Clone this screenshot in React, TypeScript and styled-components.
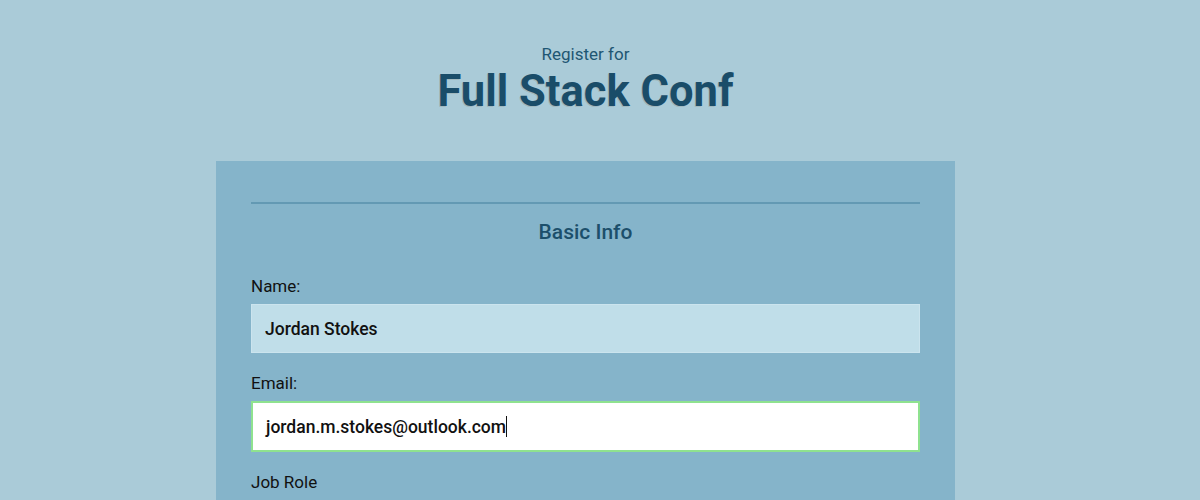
import React from "react";
import styled, { createGlobalStyle } from "styled-components";

const Global = createGlobalStyle`
  html, body { margin: 0; padding: 0; background: #aacbd8; }
  body { font-family: Roboto, "Noto Sans", sans-serif; color: #111; }
  * { box-sizing: border-box; }
`;

const Page = styled.div`
  width: 1171px;
  min-height: 500px;
  display: flex;
  flex-direction: column;
  align-items: center;
  padding-top: 42px;
`;

const Header = styled.header`
  display: flex;
  flex-direction: column;
  align-items: center;
`;

const Kicker = styled.div`
  font-size: 17px;
  line-height: 24px;
  color: #1e5673;
`;

const Title = styled.h1`
  margin: 0;
  font-size: 43.5px;
  line-height: 52px;
  font-weight: 700;
  color: #1a4d69;
  text-shadow: -1px 1px 0 rgba(120, 90, 60, 0.18);
`;

const Panel = styled.form`
  margin-top: 43px;
  width: 739px;
  background: #85b4ca;
  padding: 41px 35px 0;
`;

const Divider = styled.hr`
  margin: 0;
  border: none;
  height: 2px;
  background: #6399b3;
`;

const SectionTitle = styled.h2`
  margin: 15px 0 0;
  text-align: center;
  font-size: 21px;
  line-height: 26px;
  font-weight: 500;
  color: #1c4f6b;
`;

const Field = styled.div`
  display: flex;
  flex-direction: column;
  margin-top: 30px;
  & + & { margin-top: 19px; }
`;

const Label = styled.label`
  font-size: 17px;
  line-height: 22px;
  color: #111;
  margin-bottom: 7px;
`;

const Input = styled.input`
  width: 100%;
  height: 49px;
  padding: 0 13px;
  font-family: Roboto, "Noto Sans", sans-serif;
  font-size: 17.5px;
  font-weight: 500;
  color: #111;
  outline: none;
  background: #c0dee9;
  border: 1px solid #cbe4ee;
`;

const Caret = styled.span`
  display: inline-block;
  width: 1px;
  height: 21px;
  background: #111;
`;

const FocusedInput = styled.div`
  width: 100%;
  height: 51px;
  padding: 0 13px;
  display: flex;
  align-items: center;
  font-size: 17.5px;
  font-weight: 500;
  color: #111;
  background: #ffffff;
  border: 2px solid #8fe28f;
`;

export default function App() {
  return (
    <>
      <Global />
      <Page>
        <Header>
          <Kicker>Register for</Kicker>
          <Title>Full Stack Conf</Title>
        </Header>
        <Panel onSubmit={(e) => e.preventDefault()}>
          <Divider />
          <SectionTitle>Basic Info</SectionTitle>
          <Field>
            <Label htmlFor="name">Name:</Label>
            <Input id="name" defaultValue="Jordan Stokes" readOnly />
          </Field>
          <Field>
            <Label>Email:</Label>
            <FocusedInput>
              jordan.m.stokes@outlook.com
              <Caret />
            </FocusedInput>
          </Field>
          <Field>
            <Label>Job Role</Label>
          </Field>
        </Panel>
      </Page>
    </>
  );
}
